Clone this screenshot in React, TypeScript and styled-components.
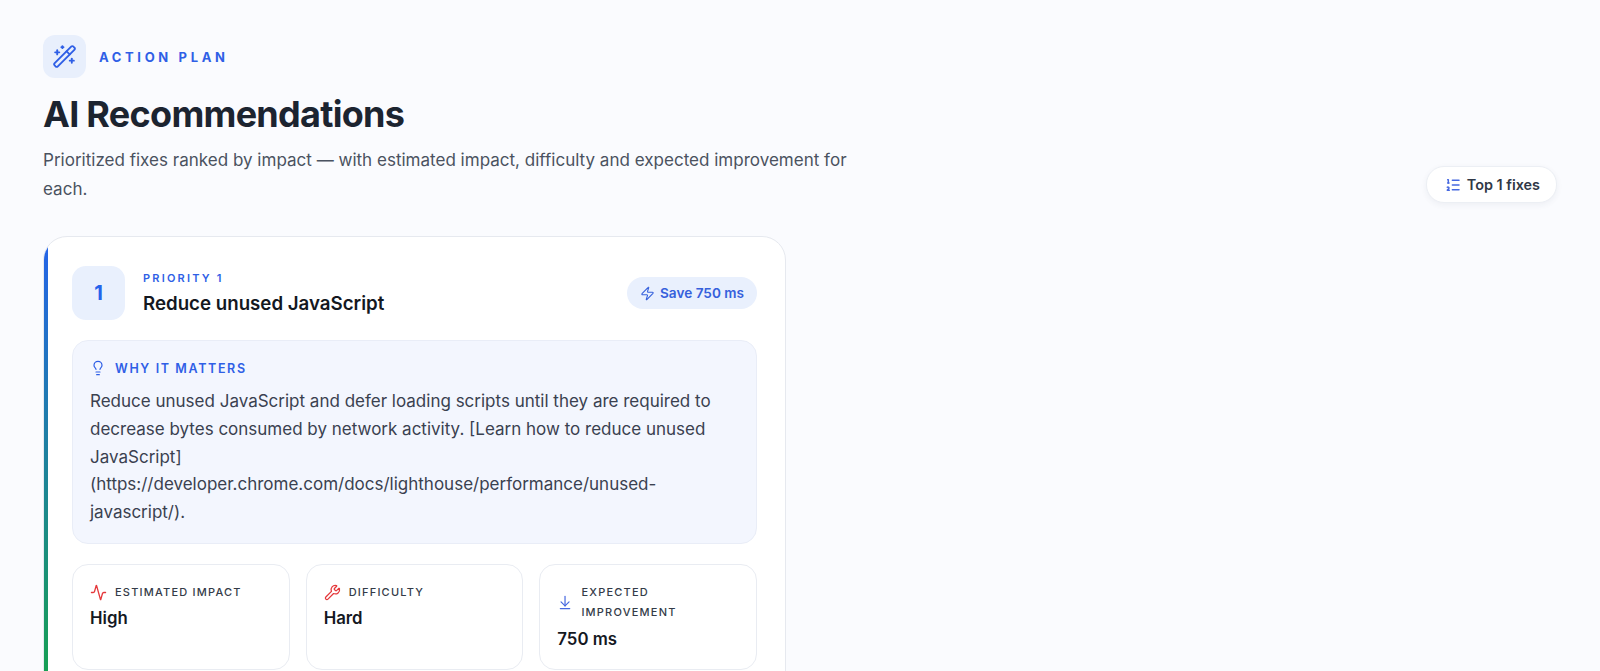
import styled, { createGlobalStyle } from "styled-components";
import {
  Activity,
  ArrowDownToLine,
  Lightbulb,
  ListOrdered,
  WandSparkles,
  Wrench,
  Zap,
} from "lucide-react";

const GlobalStyle = createGlobalStyle`
  html, body {
    margin: 0;
    height: 100%;
    overflow: hidden;
    background: #fafbfe;
  }
  body {
    font-family: Inter, "Liberation Sans", sans-serif;
    color: #1a202c;
  }
`;

const Page = styled.main`
  box-sizing: border-box;
  padding: 35px 43px 32px 43px;
`;

const Header = styled.header`
  display: flex;
  align-items: flex-end;
  justify-content: space-between;
  margin-bottom: 33px;
`;

const HeaderText = styled.div`
  max-width: 820px;
`;

const Eyebrow = styled.div`
  display: flex;
  align-items: center;
  gap: 13px;
  margin-bottom: 14px;
`;

const IconTile = styled.div`
  width: 43px;
  height: 43px;
  border-radius: 12px;
  background: #e8effc;
  color: #2f5fe6;
  display: flex;
  align-items: center;
  justify-content: center;
`;

const EyebrowLabel = styled.span`
  font-size: 13px;
  font-weight: 700;
  letter-spacing: 0.28em;
  color: #2f5fe6;
`;

const Title = styled.h1`
  margin: 0 0 10px;
  font-size: 36px;
  line-height: 44px;
  font-weight: 650;
  letter-spacing: -0.02em;
  color: #1c2430;
`;

const Subtitle = styled.p`
  margin: 0;
  font-size: 17.04px;
  line-height: 28.5px;
  color: #4a5260;
`;

const FixesPill = styled.div`
  display: flex;
  align-items: center;
  gap: 6px;
  height: 35px;
  padding: 0 16px 0 18px;
  border-radius: 18px;
  background: #fff;
  border: 1px solid #eceff4;
  box-shadow: 0 2px 6px rgba(30, 45, 80, 0.06);
  font-size: 14.4px;
  font-weight: 600;
  color: #303846;
  svg {
    color: #4668e0;
  }
`;

const Card = styled.article`
  position: relative;
  overflow: hidden;
  box-sizing: border-box;
  width: 743px;
  padding: 29px 28px;
  border: 1px solid #e6e9ef;
  border-radius: 24px;
  background: #fff;
  &::before {
    content: "";
    position: absolute;
    top: 0;
    bottom: 0;
    left: 0;
    width: 4px;
    background: linear-gradient(180deg, #2563eb 0%, #16a34a 100%);
  }
`;

const CardHead = styled.div`
  display: flex;
  align-items: center;
  gap: 18px;
  margin-bottom: 20px;
`;

const RankTile = styled.div`
  flex: none;
  width: 53px;
  height: 54px;
  border-radius: 14px;
  background: #e9f0fd;
  color: #2563eb;
  font-size: 20px;
  font-weight: 700;
  display: flex;
  align-items: center;
  justify-content: center;
`;

const HeadText = styled.div`
  flex: 1;
`;

const PriorityLabel = styled.div`
  font-size: 11px;
  line-height: 16px;
  font-weight: 600;
  letter-spacing: 0.2em;
  color: #2f5fe6;
  margin-bottom: 5px;
`;

const FixTitle = styled.h2`
  margin: 0;
  font-size: 18.7px;
  line-height: 26px;
  font-weight: 600;
  color: #14181f;
`;

const SavePill = styled.div`
  display: flex;
  align-items: center;
  gap: 5px;
  height: 32px;
  padding: 0 13px;
  border-radius: 16px;
  background: #e9f0fd;
  color: #3560dc;
  font-size: 13.6px;
  font-weight: 600;
`;

const WhyBox = styled.section`
  padding: 17px 17px 16px;
  border: 1px solid #e9edf7;
  border-radius: 16px;
  background: #f3f6fe;
  margin-bottom: 20px;
`;

const WhyHead = styled.div`
  display: flex;
  align-items: center;
  gap: 9px;
  height: 20px;
  margin-bottom: 10px;
  font-size: 12.5px;
  font-weight: 600;
  letter-spacing: 0.13em;
  color: #2f5fe6;
`;

const WhyText = styled.p`
  margin: 0;
  font-size: 17px;
  line-height: 27.8px;
  color: #3a4150;
`;

const StatGrid = styled.div`
  display: grid;
  grid-template-columns: repeat(3, 1fr);
  gap: 16px;
`;

const StatCard = styled.div`
  box-sizing: border-box;
  height: 106px;
  padding: 17px 17px 16px;
  border: 1px solid #e9ecf2;
  border-radius: 16px;
  background: #fff;
`;

const StatHead = styled.div`
  display: flex;
  align-items: center;
  gap: 8px;
  margin-bottom: 5px;
`;

const StatLabel = styled.span`
  font-size: 11px;
  line-height: 20.5px;
  font-weight: 500;
  letter-spacing: 0.11em;
  color: #343b48;
`;

const StatValue = styled.div`
  font-size: 16.8px;
  line-height: 23px;
  font-weight: 600;
  color: #14181f;
`;

const stats = [
  { label: "ESTIMATED IMPACT", value: "High", icon: <Activity size={17} color="#e5383b" strokeWidth={1.8} /> },
  { label: "DIFFICULTY", value: "Hard", icon: <Wrench size={17} color="#e5383b" strokeWidth={1.8} /> },
  { label: "EXPECTED IMPROVEMENT", value: "750 ms", icon: <ArrowDownToLine size={17} color="#4668e0" strokeWidth={1.8} /> },
];

export default function App() {
  return (
    <>
      <GlobalStyle />
      <Page>
        <Header>
          <HeaderText>
            <Eyebrow>
              <IconTile>
                <WandSparkles size={25} strokeWidth={1.8} />
              </IconTile>
              <EyebrowLabel>ACTION PLAN</EyebrowLabel>
            </Eyebrow>
            <Title>AI Recommendations</Title>
            <Subtitle>
              Prioritized fixes ranked by impact — with estimated impact, difficulty and expected
              improvement for each.
            </Subtitle>
          </HeaderText>
          <FixesPill>
            <ListOrdered size={16} strokeWidth={2.2} />
            Top 1 fixes
          </FixesPill>
        </Header>

        <Card>
          <CardHead>
            <RankTile>1</RankTile>
            <HeadText>
              <PriorityLabel>PRIORITY 1</PriorityLabel>
              <FixTitle>Reduce unused JavaScript</FixTitle>
            </HeadText>
            <SavePill>
              <Zap size={15} strokeWidth={1.8} />
              Save 750 ms
            </SavePill>
          </CardHead>

          <WhyBox>
            <WhyHead>
              <Lightbulb size={16} strokeWidth={1.8} />
              WHY IT MATTERS
            </WhyHead>
            <WhyText>
              Reduce unused JavaScript and defer loading scripts until they are required to
              decrease bytes consumed by network activity. [Learn how to reduce unused JavaScript]
              (https://developer.chrome.com/docs/lighthouse/performance/unused-javascript/).
            </WhyText>
          </WhyBox>

          <StatGrid>
            {stats.map((s) => (
              <StatCard key={s.label}>
                <StatHead>
                  {s.icon}
                  <StatLabel>{s.label}</StatLabel>
                </StatHead>
                <StatValue>{s.value}</StatValue>
              </StatCard>
            ))}
          </StatGrid>
        </Card>
      </Page>
    </>
  );
}
